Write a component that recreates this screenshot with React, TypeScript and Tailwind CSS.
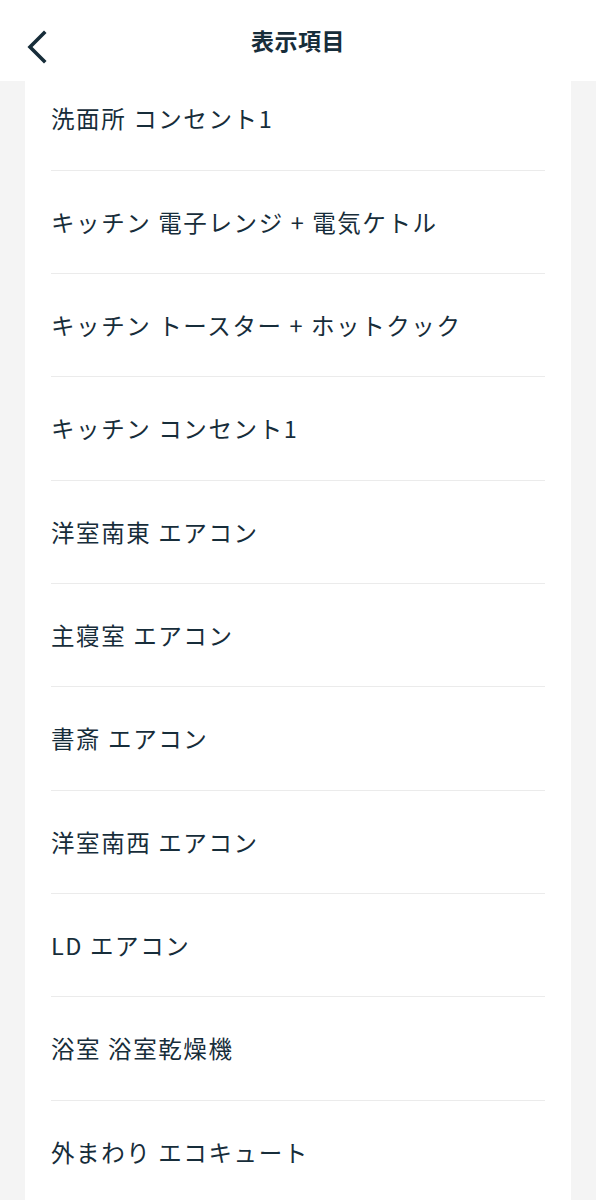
const ITEMS = [
  '洗面所 コンセント1',
  'キッチン 電子レンジ + 電気ケトル',
  'キッチン トースター + ホットクック',
  'キッチン コンセント1',
  '洋室南東 エアコン',
  '主寝室 エアコン',
  '書斎 エアコン',
  '洋室南西 エアコン',
  'LD エアコン',
  '浴室 浴室乾燥機',
  '外まわり エコキュート',
];

export default function App() {
  return (
    <div
      className="w-[596px] h-[1200px] flex flex-col bg-[#f4f4f4] overflow-hidden text-[#172d3a]"
      style={{ fontFamily: '"Noto Sans CJK JP", "Noto Sans", sans-serif' }}
    >
      {/* header */}
      <header className="h-[81px] shrink-0 bg-white relative flex items-center justify-center">
        <button className="absolute left-[24px] top-[26px] w-[30px] h-[40px]">
          <svg viewBox="0 0 30 40" className="w-[30px] h-[40px]" fill="none" stroke="#172d3a" strokeWidth="3.6" strokeLinecap="square">
            <polyline points="20,7 6,21 20,35" />
          </svg>
        </button>
        <h1 className="text-[23px] font-bold leading-none tracking-[0.5px] -mt-[1px]">表示項目</h1>
      </header>

      {/* scrolled list */}
      <div className="flex-1 overflow-hidden">
        <ul className="mx-[25px] bg-white px-[26px] -mt-[13.7px]">
          {ITEMS.map((item) => (
            <li
              key={item}
              className="h-[103.33px] flex items-center border-b border-[#ebebeb] text-[23.5px] leading-none tracking-[1.6px]"
            >
              <span className="mt-[1px]">{item}</span>
            </li>
          ))}
        </ul>
      </div>
    </div>
  );
}
